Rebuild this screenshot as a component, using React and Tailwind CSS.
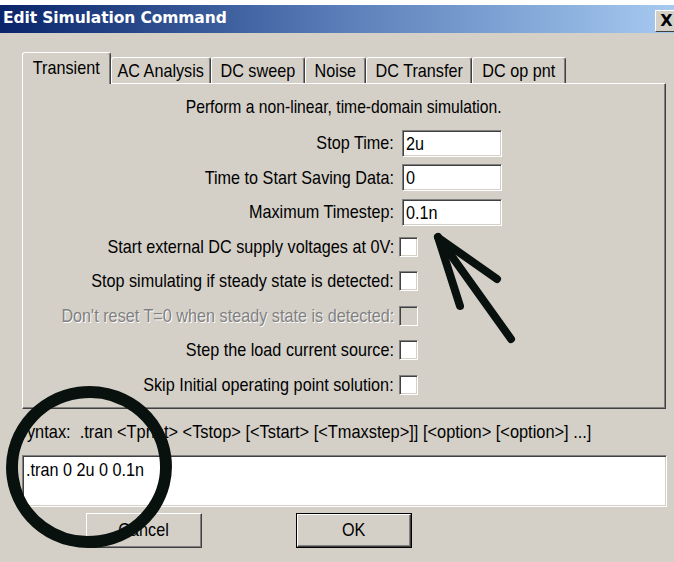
import React from 'react';

const ui = { fontFamily: '"Liberation Sans", Arial, sans-serif' };

const sunken =
  'bg-white border border-t-[#808080] border-l-[#808080] border-r-white border-b-white shadow-[inset_1px_1px_0_#404040,inset_-1px_-1px_0_#d4d0c8]';

const tabs = [
  { label: 'Transient', w: 'w-[89px]', active: true },
  { label: 'AC Analysis', w: 'w-[100px]' },
  { label: 'DC sweep', w: 'w-[94px]' },
  { label: 'Noise', w: 'w-[61px]' },
  { label: 'DC Transfer', w: 'w-[106px]' },
  { label: 'DC op pnt', w: 'w-[94px]' },
];

const fields = [
  { label: 'Stop Time:', value: '2u' },
  { label: 'Time to Start Saving Data:', value: '0' },
  { label: 'Maximum Timestep:', value: '0.1n' },
];

const checks = [
  { label: 'Start external DC supply voltages at 0V:' },
  { label: 'Stop simulating if steady state is detected:' },
  { label: "Don't reset T=0 when steady state is detected:", disabled: true },
  { label: 'Step the load current source:' },
  { label: 'Skip Initial operating point solution:' },
];

// the dialog font is a tall, narrow sans; squeeze Liberation Sans horizontally
function Narrow({ children, origin = 'origin-left', className = 'scale-x-[0.853]' }) {
  return <span className={`inline-block whitespace-pre ${origin} ${className}`}>{children}</span>;
}

function Tab({ label, w, active }) {
  if (active) {
    return (
      <div
        className={`${w} h-[32px] relative z-10 -mb-px bg-[#d4d0c8] border-l border-t border-r border-l-white border-t-white border-r-[#404040] rounded-t-[3px] shadow-[inset_-1px_0_0_#808080] flex items-start justify-center pt-[4px] text-[19px] leading-[22px]`}
      >
        <Narrow origin="origin-center">{label}</Narrow>
      </div>
    );
  }
  return (
    <div
      className={`${w} h-[26px] bg-[#d4d0c8] border-l border-t border-r border-l-white border-t-white border-r-[#404040] rounded-t-[3px] shadow-[inset_-1px_0_0_#808080] flex items-center justify-center text-[19px] leading-[22px]`}
    >
      <Narrow origin="origin-center">{label}</Narrow>
    </div>
  );
}

function Button({ children, isDefault }) {
  const frame = isDefault ? 'border border-black' : '';
  return (
    <div className={`w-[116px] h-[35px] ${frame}`}>
      <div className="w-full h-full bg-[#d4d0c8] border border-t-white border-l-white border-r-[#404040] border-b-[#404040] shadow-[inset_-1px_-1px_0_#808080] flex items-center justify-center text-[19px]">
        <Narrow origin="origin-center">{children}</Narrow>
      </div>
    </div>
  );
}

export default function App() {
  return (
    <div className="w-[674px] h-[562px] overflow-hidden bg-[#d4d0c8] flex flex-col relative text-black" style={ui}>
      <div className="h-[5px] bg-white" />

      {/* caption bar */}
      <div className="h-[28px] flex bg-gradient-to-r from-[#0a246a] via-[#5a7db8] to-[#a6caf0] pl-[3px]">
        <span
          className="self-center text-white font-bold text-[15.5px] tracking-[-0.1px]"
          style={{ fontFamily: '"DejaVu Sans", Verdana, sans-serif' }}
        >
          Edit Simulation Command
        </span>
        <div className="ml-auto mr-[-4px] self-end mb-px w-[23px] h-[22px] bg-[#d4d0c8] border border-t-white border-l-white border-r-[#404040] border-b-[#404040] flex items-center justify-center">
          <span className="font-bold text-[16px] leading-none" style={{ fontFamily: '"DejaVu Sans", sans-serif' }}>
            X
          </span>
        </div>
      </div>

      {/* tab strip */}
      <div className="flex items-end pl-[22px] pt-[19px]">
        {tabs.map((t) => (
          <Tab key={t.label} {...t} />
        ))}
      </div>

      {/* tab page */}
      <div className="ml-[22px] w-[644px] h-[326px] border border-t-white border-l-white border-r-[#404040] border-b-[#404040] shadow-[inset_-1px_-1px_0_#808080] flex flex-col">
        <div className="h-[42px] pt-[4px] flex items-center justify-center text-[19px]">
          <Narrow origin="origin-center" className="scale-x-[0.824]">
            Perform a non-linear, time-domain simulation.
          </Narrow>
        </div>
        <div className="grid grid-cols-[371px_1fr] auto-rows-[34.5px] text-[19px]">
          {fields.map((f) => (
            <React.Fragment key={f.label}>
              <div className="flex items-center justify-end">
                <Narrow origin="origin-right">{f.label}</Narrow>
              </div>
              <div className="flex items-center pl-[8px]">
                <div className={`w-[100px] h-[27px] ${sunken} flex items-center pl-[3px] leading-none`}>
                  <Narrow>{f.value}</Narrow>
                </div>
              </div>
            </React.Fragment>
          ))}
          {checks.map((c) => (
            <React.Fragment key={c.label}>
              <div
                className={`flex items-center justify-end ${c.disabled ? 'text-[#808080] [text-shadow:1px_1px_0_#ffffff]' : ''}`}
              >
                <Narrow origin="origin-right">{c.label}</Narrow>
              </div>
              <div className="flex items-center pl-[5px]">
                <div
                  className={`w-[19px] h-[20px] border border-t-[#808080] border-l-[#808080] border-r-white border-b-white shadow-[inset_1px_1px_0_#404040,inset_-1px_-1px_0_#d4d0c8] ${c.disabled ? 'bg-[#d4d0c8]' : 'bg-white'}`}
                />
              </div>
            </React.Fragment>
          ))}
        </div>
      </div>

      <div className="h-[46px] flex items-center pl-[16px] text-[19px]">
        <Narrow className="scale-x-[0.862]">
          {'Syntax:  .tran <Tprint> <Tstop> [<Tstart> [<Tmaxstep>]] [<option> [<option>] ...]'}
        </Narrow>
      </div>

      <div className={`ml-[22px] w-[645px] h-[52px] ${sunken} pl-[3px] pt-[4px] text-[19px] leading-[20px]`}>
        <Narrow>.tran 0 2u 0 0.1n</Narrow>
      </div>

      <div className="flex mt-[6px]">
        <div className="ml-[86px]">
          <Button>Cancel</Button>
        </div>
        <div className="ml-[94px]">
          <Button isDefault>OK</Button>
        </div>
      </div>

      {/* hand-drawn marks on top of the dialog */}
      <svg className="absolute inset-0 pointer-events-none" width="674" height="562" viewBox="0 0 674 562">
        <g stroke="#08110d" strokeWidth="8" strokeLinecap="round" fill="none">
          <line x1="438" y1="237" x2="511" y2="339" />
          <line x1="438" y1="237" x2="460" y2="306" />
          <line x1="440" y1="239" x2="497" y2="279" />
        </g>
        <ellipse cx="89" cy="467" rx="77" ry="75" transform="rotate(-8 89 467)" stroke="#08110d" strokeWidth="12" fill="none" />
      </svg>
    </div>
  );
}
